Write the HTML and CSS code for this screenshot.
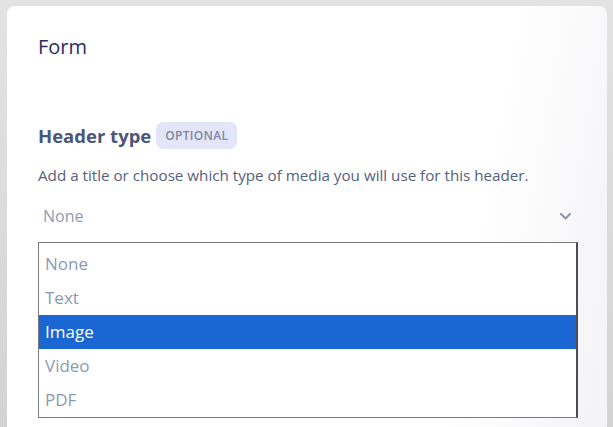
FILE: index.html
```html
<!DOCTYPE html>
<html lang="en">
<head>
<meta charset="utf-8">
<title>Form</title>
<link rel="stylesheet" href="styles.css">
</head>
<body>
<div class="page">
  <section class="card">
    <h1 class="title">Form</h1>
    <div class="field-head">
      <h2 class="label">Header type</h2>
      <span class="badge">OPTIONAL</span>
    </div>
    <p class="desc">Add a title or choose which type of media you will use for this header.</p>
    <div class="select">
      <span class="select-value">None</span>
      <svg class="chevron" width="11" height="7" viewBox="0 0 11 7"><path d="M1 1l4.5 4.5L10 1" fill="none" stroke="#8995ab" stroke-width="2" stroke-linecap="round" stroke-linejoin="round"/></svg>
    </div>
    <ul class="listbox">
      <li class="option">None</li>
      <li class="option">Text</li>
      <li class="option selected">Image</li>
      <li class="option">Video</li>
      <li class="option">PDF</li>
    </ul>
  </section>
</div>
</body>
</html>
```
FILE: styles.css
```css
html, body {
  margin: 0;
  padding: 0;
  height: 100%;
  overflow: hidden;
}
body {
  background: linear-gradient(to bottom, #e3e3e3 0%, #d3d3d3 100%);
  font-family: "Open Sans", "Noto Sans", sans-serif;
}
.page {
  padding: 6px 6px 0 7px;
}
.card {
  background: linear-gradient(100deg, #ffffff 75%, #f3f3f6 100%);
  border-radius: 8px 8px 0 0;
  padding: 29px 29px 0 31px;
  height: 421px;
  box-sizing: border-box;
  overflow: hidden;
}
.title {
  margin: 0;
  font-size: 20px;
  line-height: 24px;
  font-weight: 500;
  color: #2c2c5e;
}
.field-head {
  display: flex;
  align-items: center;
  gap: 5px;
  margin-top: 63px;
  height: 27px;
}
.label {
  margin: 0;
  font-size: 18.5px;
  line-height: 27px;
  font-weight: 700;
  color: #4b5679;
}
.badge {
  display: inline-flex;
  align-items: center;
  height: 27px;
  padding: 0 9px;
  border-radius: 7px;
  background: #e3e6f9;
  color: #7f889c;
  font-size: 12px;
  font-weight: 600;
  letter-spacing: 0.3px;
}
.desc {
  margin: 16px 0 0;
  font-size: 15.2px;
  line-height: 20px;
  color: #56617d;
}
.select {
  display: flex;
  align-items: center;
  justify-content: space-between;
  height: 36px;
  margin-top: 13px;
  padding: 0 5px;
  width: 540px;
  box-sizing: border-box;
}
.select-value {
  font-size: 16px;
  color: #8e9bb0;
}
.chevron {
  margin-right: 2px;
}
.listbox {
  list-style: none;
  margin: 8px 0 0;
  padding: 4px 0 0;
  width: 540px;
  box-sizing: border-box;
  border: 1px solid #7b7b7b;
  border-right: 2px solid #4d4d4d;
  background: #ffffff;
}
.option {
  height: 34px;
  line-height: 34px;
  padding-left: 6px;
  font-size: 17px;
  color: #8b9ab2;
}
.option.selected {
  background: #1a67d3;
  color: #ffffff;
}
```
